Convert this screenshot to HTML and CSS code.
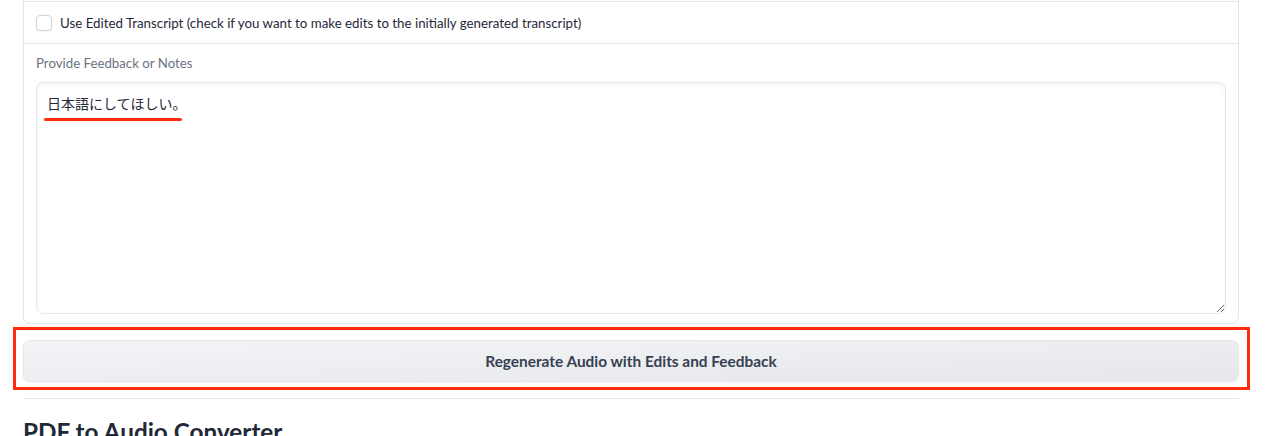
FILE: index.html
```html
<!DOCTYPE html>
<html lang="ja">
<head>
<meta charset="utf-8">
<title>Regenerate Audio</title>
<link rel="stylesheet" href="styles.css">
</head>
<body>
<main class="page">
  <section class="form">
    <div class="block block-top"></div>
    <label class="block block-check">
      <span class="checkbox"></span>
      <span class="check-text">Use Edited Transcript (check if you want to make edits to the initially generated transcript)</span>
    </label>
    <div class="block block-text">
      <span class="label">Provide Feedback or Notes</span>
      <div class="textarea-wrap">
        <textarea class="textarea">日本語にしてほしい。</textarea>
        <span class="underline"></span>
      </div>
    </div>
  </section>
  <div class="action">
    <button class="btn">Regenerate Audio with Edits and Feedback</button>
  </div>
  <hr class="divider">
  <h2 class="title">PDF to Audio Converter</h2>
</main>
</body>
</html>
```
FILE: styles.css
```css
* { box-sizing: border-box; }
html, body { margin: 0; background: #ffffff; overflow: hidden; }
body {
  font-family: "Lato", "Noto Sans CJK JP", sans-serif;
  color: #1f2937;
}
.page {
  padding: 0 27px 0 23px;
}
.form {
  margin-top: -10px;
  display: flex;
  flex-direction: column;
  gap: 1px;
  background: #e5e7eb;
  border: 1px solid #e5e7eb;
  border-radius: 0 0 7px 7px;
  overflow: hidden;
}
.block { background: #ffffff; }
.block-top { height: 10px; }
.block-check {
  height: 41px;
  display: flex;
  align-items: center;
  gap: 8px;
  padding: 0 12px;
  font-size: 13.3px;
  color: #1f2937;
}
.checkbox {
  width: 16px;
  height: 16px;
  border: 1px solid #d1d5db;
  border-radius: 4px;
  background: #ffffff;
  box-shadow: 0 1px 2px rgba(0,0,0,0.05);
  flex: none;
}
.block-text {
  padding: 9px 12px;
}
.label {
  display: block;
  font-size: 13.25px;
  line-height: 20px;
  color: #6b7280;
  margin-bottom: 9px;
}
.textarea-wrap { position: relative; }
.textarea {
  display: block;
  width: 100%;
  height: 232px;
  padding: 10px 10px;
  border: 1px solid #e5e7eb;
  border-radius: 7px;
  box-shadow: inset 0 2px 4px rgba(0,0,0,0.05);
  font-family: "Noto Sans CJK JP", sans-serif;
  font-size: 14px;
  line-height: 20px;
  color: #1f2937;
  background: #ffffff;
  outline: none;
}
.underline {
  position: absolute;
  left: 8px;
  top: 36px;
  width: 138px;
  height: 3px;
  border-radius: 2px;
  background: #fe2c0c;
}
.action {
  position: relative;
  margin-top: 16px;
}
.action::after {
  content: "";
  position: absolute;
  top: -13px;
  left: -10px;
  right: -11px;
  bottom: -8px;
  border: 3px solid #fe2c0c;
  pointer-events: none;
}
.btn {
  display: block;
  width: 100%;
  height: 42px;
  border: 1px solid #e5e7eb;
  border-radius: 7px;
  background: linear-gradient(to bottom right, #f3f4f6, #e5e7eb);
  box-shadow: 0 1px 2px rgba(0,0,0,0.05);
  font-family: "Lato", sans-serif;
  font-size: 15.4px;
  font-weight: 700;
  color: #374151;
}
.divider {
  margin: 16px 0 0;
  border: 0;
  border-top: 1px solid #e5e7eb;
}
.title {
  margin: 17px 0 0;
  font-size: 24.3px;
  line-height: 32px;
  font-weight: 700;
  color: #1f2937;
}
```
